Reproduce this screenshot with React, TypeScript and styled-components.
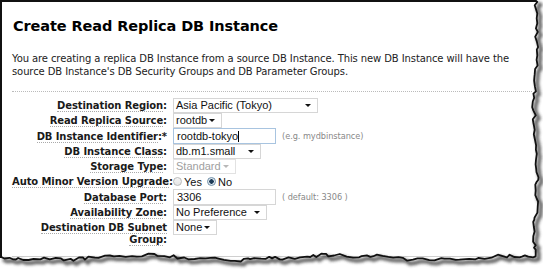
import React from 'react'
import styled, { createGlobalStyle } from 'styled-components'

const GlobalStyle = createGlobalStyle`
  html, body { margin: 0; padding: 0; background: #fff; }
  body { font-family: "DejaVu Sans", Verdana, sans-serif; }
`

// deterministic jitter for the torn paper edge
const makeRand = (seed: number) => () => {
  seed = (seed * 16807) % 2147483647
  return seed / 2147483647
}

const tornPath = () => {
  const rnd = makeRand(7)
  const pts: string[] = ['M 535 0']
  let y = 0
  while (y < 256) {
    y += 2 + rnd() * 4
    const x = 535.5 + Math.sin(y / 23) * 1.5 + (rnd() - 0.5) * 4
    pts.push(`L ${x.toFixed(1)} ${Math.min(y, 258).toFixed(1)}`)
  }
  let x = 536
  while (x > 0) {
    x -= 2 + rnd() * 5
    const yy = 257.5 + Math.sin(x / 31) * 2 + Math.sin(x / 9) * 0.7 + (rnd() - 0.5) * 3.2
    pts.push(`L ${Math.max(x, 0).toFixed(1)} ${yy.toFixed(1)}`)
  }
  return pts.join(' ')
}

const TORN = tornPath()

const App: React.FC = () => {
  return (
    <Sheet>
      <GlobalStyle />
      <Panel>
        <Title>Create Read Replica DB Instance</Title>
        <Intro>
          You are creating a replica DB Instance from a source DB Instance. This new DB Instance will have the
          source DB Instance's DB Security Groups and DB Parameter Groups.
        </Intro>
        <Form>
          <Label><Term>Destination Region</Term>:</Label>
          <Cell><Select width={145}>Asia Pacific (Tokyo)<Arrow /></Select></Cell>

          <Label><Term>Read Replica Source</Term>:</Label>
          <Cell><Select width={49}>rootdb<Arrow /></Select></Cell>

          <Label><Term>DB Instance Identifier</Term>:*</Label>
          <Cell>
            <Input focused>rootdb-tokyo<Caret /></Input>
            <Hint>(e.g. mydbinstance)</Hint>
          </Cell>

          <Label><Term>DB Instance Class</Term>:</Label>
          <Cell><Select width={88}>db.m1.small<Arrow /></Select></Cell>

          <Label><Term>Storage Type</Term>:</Label>
          <Cell><Select width={63} disabled>Standard<Arrow disabled /></Select></Cell>

          <Label><Term>Auto Minor Version Upgrade</Term>:</Label>
          <Cell>
            <RadioItem><Radio />Yes</RadioItem>
            <RadioItem><Radio checked />No</RadioItem>
          </Cell>

          <Label><Term>Database Port</Term>:</Label>
          <Cell>
            <Input>3306</Input>
            <Hint>( default: 3306 )</Hint>
          </Cell>

          <Label><Term>Availability Zone</Term>:</Label>
          <Cell><Select width={94}>No Preference<Arrow /></Select></Cell>

          <Label tall><Term>Destination DB Subnet<br />Group</Term>:</Label>
          <Cell top><Select width={44}>None<Arrow /></Select></Cell>
        </Form>
        <Rule />
      </Panel>
      <Edge viewBox="0 0 543 271" width={543} height={271}>
        <defs>
          <filter id="blur" x="-10%" y="-10%" width="120%" height="120%">
            <feGaussianBlur stdDeviation="1.6" />
          </filter>
        </defs>
        <path d={TORN} transform="translate(3 3)" fill="none" stroke="#333" strokeWidth={4} opacity={0.75} filter="url(#blur)" />
        <path d={TORN} fill="none" stroke="#111" strokeWidth={1.8} strokeLinejoin="round" />
      </Edge>
    </Sheet>
  )
}

const Sheet = styled.div`
  position: relative;
  width: 543px;
  height: 271px;
  overflow: hidden;
  background: #fff;
`

const Panel = styled.section`
  box-sizing: border-box;
  width: 536px;
  height: 258px;
  border-left: 2px solid #111;
  border-top: 2px solid #111;
  padding: 14px 0 0 10px;
  background: #fff;
`

const Title = styled.h1`
  margin: 0;
  font-size: 14.5px;
  letter-spacing: -0.1px;
  line-height: 20px;
  font-weight: bold;
  color: #000;
  padding-left: 1px;
`

const Intro = styled.p`
  margin: 16px 0 0;
  width: 515px;
  font-size: 10px;
  letter-spacing: -0.1px;
  line-height: 13px;
  color: #222;
`

const Form = styled.div`
  display: grid;
  grid-template-columns: 155px auto;
  column-gap: 6px;
  width: 520px;
  margin-top: 13px;
  padding-top: 6px;
  border-top: 1px dotted #bbb;
`

const Label = styled.div<{ tall?: boolean }>`
  text-align: right;
  white-space: nowrap;
  font-size: 10px;
  letter-spacing: -0.1px;
  font-weight: bold;
  line-height: ${p => (p.tall ? '12px' : '15px')};
  color: #1a1a1a;
  align-self: ${p => (p.tall ? 'start' : 'center')};
  padding-top: ${p => (p.tall ? '2px' : '0')};
`

const Term = styled.span`
  border-bottom: 1px dotted #aaa;
`

const Cell = styled.div<{ top?: boolean }>`
  display: flex;
  align-items: center;
  align-self: ${p => (p.top ? 'start' : 'center')};
  min-height: 15px;
  font-family: "Liberation Sans", Arial, sans-serif;
  font-size: 11px;
`

const Select = styled.div<{ width: number; disabled?: boolean }>`
  position: relative;
  box-sizing: border-box;
  width: ${p => p.width}px;
  height: 15px;
  padding: 0 0 0 2px;
  line-height: 13px;
  border: 1px solid ${p => (p.disabled ? '#e2e2e2' : '#d6d6d6')};
  background: #fff;
  color: ${p => (p.disabled ? '#a0a0a0' : '#111')};
`

const Arrow = styled.span<{ disabled?: boolean }>`
  position: absolute;
  right: 6px;
  top: 5px;
  width: 0;
  height: 0;
  border-left: 3px solid transparent;
  border-right: 3px solid transparent;
  border-top: 3px solid ${p => (p.disabled ? '#b8b8b8' : '#111')};
`

const Input = styled.div<{ focused?: boolean }>`
  display: flex;
  align-items: center;
  box-sizing: border-box;
  width: 103px;
  height: 16px;
  padding-left: 3px;
  border: 1px solid ${p => (p.focused ? '#a8c4e0' : '#d6d6d6')};
  color: #111;
`

const Caret = styled.span`
  display: inline-block;
  width: 1px;
  height: 11px;
  background: #000;
`

const Hint = styled.span`
  margin-left: 6px;
  font-family: "DejaVu Sans", Verdana, sans-serif;
  font-size: 8.2px;
  letter-spacing: -0.05px;
  color: #888;
`

const RadioItem = styled.label`
  display: inline-flex;
  align-items: center;
  margin-right: 5px;
  color: #111;
  &:first-child { margin-left: 0; }
`

const Radio = styled.span<{ checked?: boolean }>`
  box-sizing: border-box;
  width: 9px;
  height: 9px;
  margin-right: 2px;
  border-radius: 50%;
  border: 1px solid ${p => (p.checked ? '#6f8fa8' : '#b9b9b9')};
  background: ${p =>
    p.checked
      ? 'radial-gradient(circle, #1d3b57 0 2px, #dfe8ef 2.5px)'
      : 'linear-gradient(#f4f4f4, #e4e4e4)'};
`

const Rule = styled.div`
  width: 520px;
  margin-top: 10px;
  border-top: 1px solid #cfcfcf;
`

const Edge = styled.svg`
  position: absolute;
  left: 0;
  top: 0;
  pointer-events: none;
`

export default App
